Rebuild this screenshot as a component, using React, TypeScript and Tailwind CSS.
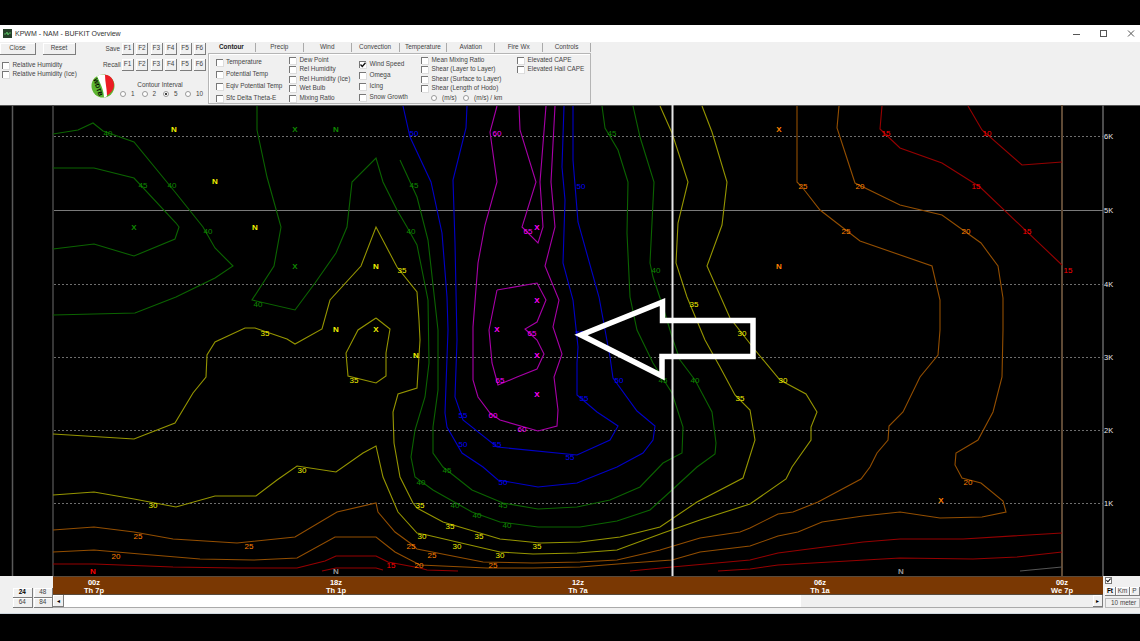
import React from "react";

const FONT = "font-['Liberation_Sans',Arial,sans-serif]";

const DKGREEN = "#0b6400";
const YELLOW = "#959500";
const ORANGE = "#934e00";
const RED = "#960000";
const BLUE = "#0000c8";
const MAGENTA = "#a800a8";

// contour lines, in page coordinates
const contours: [string, string][] = [
  [DKGREEN, "53,134 78,130 93,123 103,131 134,142 175,192 203,227 215,248 233,266 215,278 176,297 135,313 53,315"],
  [DKGREEN, "53,168 94,168 134,178 176,223 179,227 175,239 134,256 94,244 53,249"],
  [DKGREEN, "257,106 257,130 267,177 281,227 274,266 252,300 295,310 315,283 336,253 347,227 352,182 376,158 383,182 397,210 407,227 417,245 428,300 429,363 425,397 415,430 411,457 415,477 433,490 472,512 500,522 538,527 580,527 617,521 650,510 672,490 697,467 715,454 716,443 712,412 695,380 680,360 673,340 663,307 653,277 650,263 654,182 640,137 633,106"],
  [DKGREEN, "400,160 417,197 428,240 438,330 438,390 433,427 433,453 443,467 472,490 503,503 538,509 577,507 610,500 640,487 663,463 682,453 683,427 672,393 653,363 637,330 630,297 627,233 628,182 618,150 605,128 602,106"],
  [YELLOW, "53,434 134,439 175,423 193,393 206,377 207,355 215,342 245,328 255,328 287,339 295,344 322,329 330,300 361,266 376,227 397,267 417,292 419,320 420,340 417,388 398,394 393,412 394,443 400,477 413,503 417,508 443,522 500,539 540,543 580,542 620,537 660,527 697,502 743,478 755,440 750,410 735,395 720,367 705,340 687,297 676,263 678,223 688,182 672,133 660,106"],
  [YELLOW, "376,318 390,329 386,353 386,376 376,383 348,376 346,353 358,330 376,318"],
  [YELLOW, "53,495 94,492 134,499 176,507 215,496 256,496 277,480 297,466 336,472 363,453 376,446 383,477 398,512 417,533 427,535 457,542 500,552 533,554 577,553 617,550 663,533 700,520 750,504 786,479 792,467 811,440 811,427 817,412 806,394 780,380 755,350 730,318 707,266 722,225 727,182 712,132 702,106"],
  [ORANGE, "53,530 94,527 134,532 173,539 237,543 295,537 337,512 376,503 378,512 395,532 410,543 417,549 483,562 533,563 580,562 617,560 660,550 700,538 740,532 750,528 778,514 793,512 818,502 861,479 870,467 877,453 888,440 889,426 903,412 920,377 938,355 940,330 940,300 932,266 860,241 820,210 802,187 797,182 797,157 797,106"],
  [ORANGE, "53,552 94,550 140,554 200,559 253,560 297,558 335,537 376,537 395,552 420,565 487,568 533,568 580,567 630,563 672,560 700,552 750,546 778,536 798,532 822,522 863,516 900,512 940,518 982,517 1006,512 1003,501 981,483 962,478 955,465 956,453 978,440 993,412 1002,377 1003,330 1003,298 998,266 981,243 942,215 900,205 855,183 837,128 839,106"],
  [RED, "882,106 880,129 900,148 942,163 980,187 1062,265"],
  [RED, "968,106 982,130 1022,165 1062,162"],
  [RED, "630,571 672,567 750,560 778,553 863,542 900,539 963,539 1062,533"],
  [RED, "718,571 750,569 778,565 900,558 973,559 1017,557 1062,552"],
  [RED, "53,564 94,564 173,567 237,568 297,568 325,561 336,556 376,556 388,562 420,568 427,570 458,571"],
  [RED, "322,571 336,568 376,568 383,570"],
  [BLUE, "403,106 410,137 431,182 442,233 447,297 448,330 445,413 447,427 462,453 483,467 498,480 538,487 577,483 617,467 643,453 653,440 655,426 637,411 613,378 610,357 599,297 578,222 573,160 573,106"],
  [BLUE, "467,106 466,128 453,180 455,243 457,340 455,397 463,420 497,447 577,455 610,440 618,426 597,412 577,395 577,363 578,347 573,300 563,263 565,200 562,167 564,106"],
  [MAGENTA, "497,106 490,132 497,182 485,225 478,263 473,327 473,380 478,397 490,413 500,420 538,431 557,426 558,410 554,377 562,354 553,327 559,300 545,266 555,227 551,182 555,106"],
  [MAGENTA, "519,106 520,130 536,182 522,227 538,243 543,227 540,182 546,106"],
  [MAGENTA, "497,290 537,283 546,300 537,322 525,329 537,340 544,354 537,369 517,377 498,385 492,363 489,330 497,290"],
  ["#555555", "1020,571 1062,567"],
];

const G = "#0f8a00";
const Y = "#f2f200";
const O = "#ff8000";
const R = "#ff0000";
const B = "#0000ff";
const M = "#ff00ff";

const labels: [string, number, number, string][] = [
  ["40", 108, 133, G], ["45", 143, 185, G], ["40", 172, 185, G], ["40", 208, 231, G], ["40", 258, 304, G],
  ["45", 414, 185, G], ["40", 411, 231, G], ["45", 612, 133, G], ["40", 656, 270, G], ["45", 663, 380, G],
  ["40", 695, 380, G], ["45", 447, 470, G], ["40", 421, 482, G], ["40", 455, 505, G], ["45", 503, 505, G],
  ["40", 477, 515, G], ["40", 507, 525, G],
  ["X", 134, 227, G], ["X", 295, 129, G], ["X", 295, 266, G], ["N", 336, 129, G],
  ["N", 174, 129, Y], ["N", 215, 181, Y], ["N", 255, 227, Y], ["N", 376, 266, Y], ["N", 336, 329, Y],
  ["N", 416, 355, Y], ["X", 376, 329, Y],
  ["35", 265, 333, Y], ["35", 402, 270, Y], ["35", 354, 380, Y], ["30", 302, 470, Y], ["30", 153, 505, Y],
  ["35", 694, 304, Y], ["30", 742, 333, Y], ["30", 783, 380, Y], ["35", 740, 398, Y], ["35", 420, 505, Y],
  ["35", 450, 526, Y], ["30", 422, 536, Y], ["35", 479, 536, Y], ["35", 537, 546, Y], ["30", 457, 546, Y],
  ["30", 500, 555, Y],
  ["25", 803, 186, O], ["20", 860, 186, O], ["25", 846, 231, O], ["20", 966, 231, O], ["X", 779, 129, O],
  ["N", 779, 266, O], ["20", 968, 482, O], ["X", 941, 500, O], ["25", 138, 536, O], ["25", 249, 546, O],
  ["20", 116, 556, O], ["25", 411, 546, O], ["25", 432, 555, O], ["20", 419, 565, O], ["25", 493, 565, O],
  ["15", 886, 133, R], ["10", 987, 133, R], ["15", 976, 186, R], ["15", 1027, 231, R], ["15", 1068, 270, R],
  ["15", 391, 565, R], ["N", 93, 571, R],
  ["N", 336, 571, "#999999"], ["N", 901, 571, "#999999"],
  ["50", 414, 133, B], ["50", 581, 186, B], ["50", 580, 333, B], ["50", 619, 380, B], ["55", 584, 398, B],
  ["55", 463, 415, B], ["50", 463, 444, B], ["55", 497, 444, B], ["55", 570, 457, B], ["50", 503, 482, B],
  ["60", 497, 133, M], ["65", 528, 231, M], ["X", 537, 227, M], ["X", 537, 300, M], ["X", 497, 329, M],
  ["65", 532, 333, M], ["X", 537, 355, M], ["X", 537, 394, M], ["65", 500, 380, M], ["60", 493, 415, M],
  ["60", 522, 429, M],
];

const heights: [string, number, boolean][] = [
  ["6K", 136, true], ["5K", 210, false], ["4K", 284, true], ["3K", 357, true], ["2K", 430, true], ["1K", 503, true],
];

function Check({ label, checked, className }: { label: string; checked?: boolean; className?: string }) {
  return (
    <div className={"flex items-center h-[9px] whitespace-nowrap " + (className ?? "")}>
      <span className="w-[7px] h-[7px] border-t border-l border-[#777] bg-white shadow-[1px_1px_0_#ddd] flex items-center justify-center shrink-0">
        {checked && (
          <svg width="6" height="6" viewBox="0 0 6 6">
            <path d="M0.5 2.5 L2.3 4.5 L5.5 0.8" stroke="#111" strokeWidth="1.3" fill="none" />
          </svg>
        )}
      </span>
      <span className="ml-[3.5px]">{label}</span>
    </div>
  );
}

function Radio({ label, on, className }: { label: string; on?: boolean; className?: string }) {
  return (
    <span className={"flex items-center " + (className ?? "")}>
      <span className="w-[6px] h-[6px] rounded-full border border-[#999] bg-white flex items-center justify-center shrink-0">
        {on && <span className="w-[2px] h-[2px] rounded-full bg-black" />}
      </span>
      <span className="ml-[5px]">{label}</span>
    </span>
  );
}

function Key({ label, className }: { label: string; className?: string }) {
  return (
    <div
      className={
        "bg-[#f0f0f0] border-r border-b border-[#7d7d7d] shadow-[inset_1px_1px_0_#fff] flex items-center justify-center " +
        (className ?? "")
      }
    >
      {label}
    </div>
  );
}

function FRow({ label }: { label: string }) {
  return (
    <div className="flex items-center h-[12px]">
      <span className="w-[17px] text-right">{label}</span>
      <div className="flex gap-[2.4px] ml-[2px]">
        {["F1", "F2", "F3", "F4", "F5", "F6"].map((f) => (
          <Key key={f} label={f} className="w-[12px] h-[12px]" />
        ))}
      </div>
    </div>
  );
}

function Logo() {
  return (
    <svg width="24" height="24" viewBox="0 0 24 24" className="shrink-0">
      <circle cx="12" cy="12" r="11.5" fill="#5cb531" />
      <path d="M13 1 C17 0 23 4 23 11 C23 16 19 20 15 22 C16 16 13 9 13 1 Z" fill="#ec1c24" />
      <path d="M6 2 C8 0.5 11 0.5 14 1 C14 8 16 15 16 22 C15 23 14 23.5 13 23.5 C13 16 9 9 6 2 Z" fill="#fff" />
      <text x="6" y="6" fontSize="6" fontWeight="bold" fill="#000" fontFamily="Liberation Sans" transform="rotate(72 6 4) translate(0 2)">
        WDTB
      </text>
    </svg>
  );
}

function Chart() {
  return (
    <svg className="block" width="1140" height="471" viewBox="0 105 1140 471">
      <rect x="0" y="105" width="1140" height="471" fill="#000" />
      <line x1="0" y1="105.5" x2="1140" y2="105.5" stroke="#555" />
      <line x1="12.5" y1="105" x2="12.5" y2="576" stroke="#5a5a5a" strokeWidth="1.5" />
      <line x1="53" y1="105" x2="53" y2="576" stroke="#484848" strokeWidth="1.5" />
      <line x1="1103" y1="105" x2="1103" y2="576" stroke="#666" strokeWidth="1.5" />
      {heights.map(([t, y, dashed]) => (
        <g key={t}>
          <line
            x1="54"
            y1={y + 0.5}
            x2="1103"
            y2={y + 0.5}
            stroke={dashed ? "#6e6e6e" : "#7a7a7a"}
            strokeDasharray={dashed ? "2 2" : undefined}
          />
          <text x="1104" y={y + 2.5} fontSize="7.5" fill="#e8e8e8" fontFamily="Liberation Sans">
            {t}
          </text>
        </g>
      ))}
      <line x1="1062" y1="105" x2="1062" y2="576" stroke="#5f4a35" strokeWidth="2" />
      {contours.map(([c, p], i) => (
        <polyline key={i} points={p} fill="none" stroke={c} strokeWidth="1.1" />
      ))}
      {labels.map(([t, x, y, c], i) => (
        <text
          key={i}
          x={x}
          y={y + 3}
          fontSize="8"
          fontWeight={t === "N" || t === "X" ? "bold" : "normal"}
          textAnchor="middle"
          fill={c}
          fontFamily="Liberation Sans"
        >
          {t}
        </text>
      ))}
      <line x1="672.5" y1="105" x2="672.5" y2="576" stroke="#e6e6e6" strokeWidth="2" />
      <polygon
        points="581,335 662.5,302 662.5,320.5 753,320.5 753,356.5 662,356.5 662,376"
        fill="none"
        stroke="#fff"
        strokeWidth="5.5"
        strokeLinejoin="miter"
      />
    </svg>
  );
}

export default function App() {
  return (
    <div className={"w-[1140px] h-[641px] bg-black overflow-hidden flex flex-col text-[6.4px] leading-none text-[#444] " + FONT}>
      <div className="h-[25px] shrink-0" />

      {/* title bar */}
      <div className="h-[17px] shrink-0 bg-white flex items-center text-[7px] text-[#333]">
        <svg width="9" height="9" viewBox="0 0 9 9" className="ml-[3px] shrink-0">
          <rect x="0" y="0" width="9" height="9" fill="#26402a" />
          <path d="M1 5 L3 5 L4 3 L5 6 L6 4 L8 4" stroke="#5fd06a" strokeWidth="0.8" fill="none" />
        </svg>
        <span className="ml-[3px]">KPWM - NAM - BUFKIT Overview</span>
        <div className="ml-auto flex items-center">
          <svg width="64" height="10" viewBox="0 0 64 10" className="mr-[4px]">
            <line x1="1" y1="5.5" x2="8" y2="5.5" stroke="#555" />
            <rect x="28.5" y="1.5" width="6" height="6" fill="none" stroke="#555" />
            <path d="M56 1.5 L62 7.5 M62 1.5 L56 7.5" stroke="#555" />
          </svg>
        </div>
      </div>

      {/* toolbar */}
      <div className="h-[63px] shrink-0 bg-[#f0f0f0] flex">
        <div className="w-[208px] shrink-0 flex">
          <div className="w-[103px] shrink-0 pt-[1px]">
            <div className="flex">
              <Key label="Close" className="w-[36px] h-[12px]" />
              <Key label="Reset" className="w-[33px] h-[12px] ml-[7px]" />
            </div>
            <div className="mt-[6px] ml-[2px] flex flex-col">
              <Check label="Relative Humidity" />
              <Check label="Relative Humidity (Ice)" />
            </div>
          </div>
          <div className="pt-[1px]">
            <div className="flex flex-col gap-[4px]">
              <FRow label="Save" />
              <FRow label="Recall" />
            </div>
            <div className="flex mt-[3px] ml-[-12px]">
              <Logo />
              <div className="ml-[5px] mt-[7.5px]">
                <div className="text-center w-[80px]">Contour Interval</div>
                <div className="flex mt-[3px]">
                  <Radio label="1" className="w-[21.5px]" />
                  <Radio label="2" className="w-[21.5px]" />
                  <Radio label="5" on className="w-[22px]" />
                  <Radio label="10" />
                </div>
              </div>
            </div>
          </div>
        </div>

        <div className="w-[383px] shrink-0 flex flex-col">
          <div className="flex h-[10px] pt-[1px]">
            {["Contour", "Precip", "Wind", "Convection", "Temperature", "Aviation", "Fire Wx", "Controls"].map((t, i) => (
              <div
                key={t}
                className={
                  "w-[48px] flex items-center justify-center border-r border-[#aaa] " +
                  (i === 0 ? "font-bold text-[#222]" : "")
                }
              >
                {t}
              </div>
            ))}
          </div>
          <div className="h-[51px] mt-[1px] border border-[#b5b5b5] flex shadow-[inset_1px_1px_0_#fff]">
            <div className="w-[74px] pl-[6.5px] pt-[3.5px] flex flex-col gap-[3px]">
              <Check label="Temperature" />
              <Check label="Potential Temp" />
              <Check label="Eqiv Potential Temp" />
              <Check label="Sfc Delta Theta-E" />
            </div>
            <div className="w-[72px] pl-[6px] pt-[1.5px] flex flex-col gap-[0.5px]">
              <Check label="Dew Point" />
              <Check label="Rel Humidity" />
              <Check label="Rel Humidity (Ice)" />
              <Check label="Wet Bulb" />
              <Check label="Mixing Ratio" />
            </div>
            <div className="w-[60px] pl-[4px] pt-[5.5px] flex flex-col gap-[2px]">
              <Check label="Wind Speed" checked />
              <Check label="Omega" />
              <Check label="Icing" />
              <Check label="Snow Growth" />
            </div>
            <div className="w-[95px] pl-[6px] pt-[1.5px] flex flex-col gap-[0.5px]">
              <Check label="Mean Mixing Ratio" />
              <Check label="Shear (Layer to Layer)" />
              <Check label="Shear (Surface to Layer)" />
              <Check label="Shear (Length of Hodo)" />
              <div className="flex h-[9px] ml-[10px]">
                <Radio label="(m/s)" className="w-[32px]" />
                <Radio label="(m/s) / km" />
              </div>
            </div>
            <div className="pl-[7px] pt-[1.5px] flex flex-col gap-[0.5px]">
              <Check label="Elevated CAPE" />
              <Check label="Elevated Hail CAPE" />
            </div>
          </div>
        </div>
        <div className="flex-1" />
      </div>

      <Chart />

      {/* time axis and scroll bar */}
      <div className="h-[38px] shrink-0 bg-[#f0f0f0] flex border-b border-[#cfd8e0]">
        <div className="w-[53px] shrink-0 pt-[12px] pl-[13px]">
          <div className="grid grid-cols-2 w-[40px] gap-x-[1px]">
            <Key label="24" className="h-[10px] font-bold text-black" />
            <Key label="48" className="h-[10px]" />
            <Key label="64" className="h-[10px]" />
            <Key label="84" className="h-[10px]" />
          </div>
        </div>
        <div className="w-[1050px] shrink-0 flex flex-col">
          <div className="h-[19px] bg-[#7a3803] border-t border-b border-[#5a4a3a] relative text-white text-[7.5px] font-bold">
            <TimeLabel left="41px" a="00z" b="Th 7p" />
            <TimeLabel left="283px" a="18z" b="Th 1p" />
            <TimeLabel left="525px" a="12z" b="Th 7a" />
            <TimeLabel left="767px" a="06z" b="Th 1a" />
            <TimeLabel left="1009px" a="00z" b="We 7p" />
          </div>
          <div className="h-[13px] flex border-b border-[#aaa]">
            <Key label="◂" className="w-[11px] h-full text-[6px] text-black" />
            <div className="w-[737px] bg-white" />
            <div className="flex-1 bg-[#f0f0f0]" />
            <Key label="▸" className="w-[10px] h-full text-[6px] text-black" />
          </div>
        </div>
        <div className="flex-1 pl-[2px]">
          <div className="mt-[1px] w-[7px] h-[7px] border border-[#777] bg-white flex items-center justify-center">
            <svg width="5" height="5" viewBox="0 0 6 6">
              <path d="M0.5 2.5 L2.3 4.5 L5.5 0.8" stroke="#111" strokeWidth="1.3" fill="none" />
            </svg>
          </div>
          <div className="flex mt-[3px] h-[9px]">
            <Key label="Ft" className="w-[11px] font-bold text-black" />
            <Key label="Km" className="w-[14px]" />
            <Key label="P" className="w-[10px]" />
          </div>
          <div className="mt-[2px] h-[10px] flex items-center pl-[5px] border border-[#bbb]">10 meter</div>
        </div>
      </div>
    </div>
  );
}

function TimeLabel({ left, a, b }: { left: string; a: string; b: string }) {
  return (
    <div className="absolute top-[2px] w-0 flex flex-col items-center leading-[7.5px]" style={{ left }}>
      <span>{a}</span>
      <span className="whitespace-nowrap">{b}</span>
    </div>
  );
}
